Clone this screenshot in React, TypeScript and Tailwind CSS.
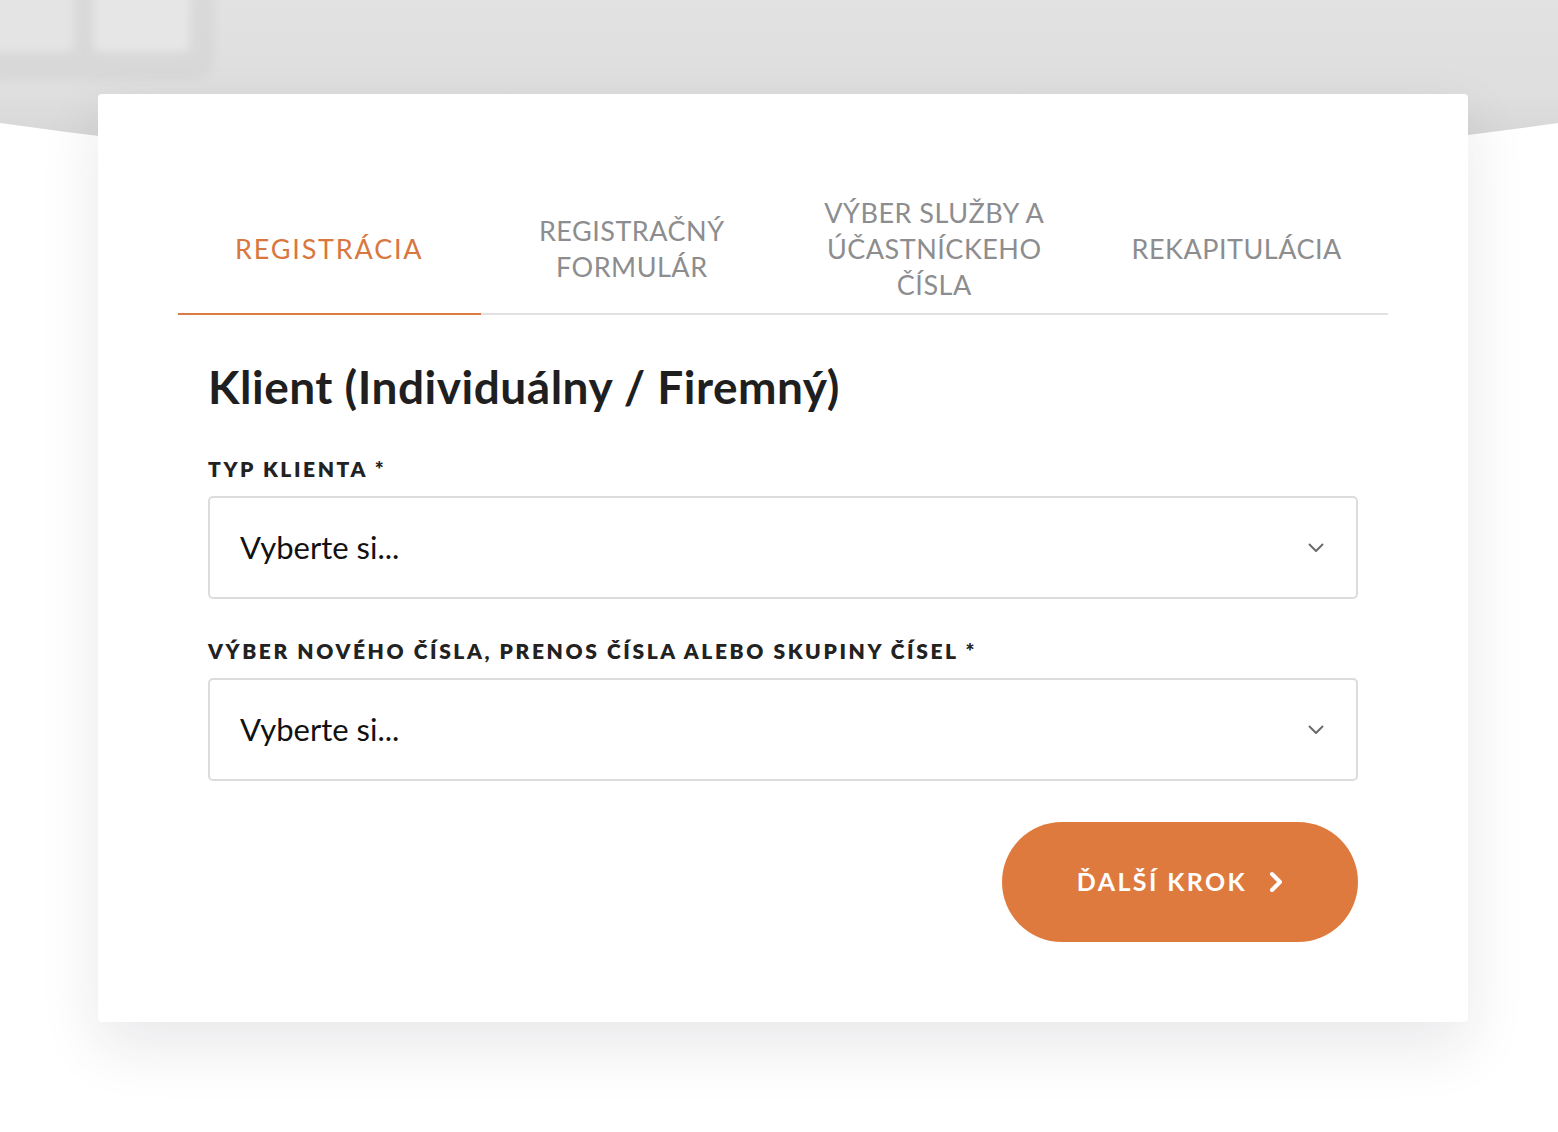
import React from 'react';

const tabs = [
  { label: 'REGISTRÁCIA', active: true },
  { label: 'REGISTRAČNÝ FORMULÁR', active: false },
  { label: 'VÝBER SLUŽBY A ÚČASTNÍCKEHO ČÍSLA', active: false },
  { label: 'REKAPITULÁCIA', active: false },
];

function Backdrop() {
  return (
    <svg
      className="absolute left-0 top-0 h-[240px] w-full"
      viewBox="0 0 1558 240"
      preserveAspectRatio="none"
    >
      <defs>
        <linearGradient id="bg" x1="0" y1="0" x2="0" y2="1">
          <stop offset="0" stopColor="#e2e2e2" />
          <stop offset="0.55" stopColor="#dedede" />
          <stop offset="1" stopColor="#cfcfcf" />
        </linearGradient>
        <filter id="soft">
          <feGaussianBlur stdDeviation="4" />
        </filter>
      </defs>
      <path d="M0 0 H1558 V123 Q779 233 0 123 Z" fill="url(#bg)" />
      {/* blurred keyboard keys */}
      <g filter="url(#soft)">
        <rect x="-20" y="-20" width="235" height="100" rx="22" fill="#d4d4d4" opacity="0.6" />
        <rect x="-10" y="-10" width="84" height="62" rx="8" fill="#e4e4e4" />
        <rect x="94" y="-10" width="96" height="62" rx="8" fill="#e6e6e6" />
      </g>
    </svg>
  );
}

function Chevron() {
  return (
    <svg width="16" height="10" viewBox="0 0 16 10" fill="none">
      <path d="M1.5 1.5 L8 8 L14.5 1.5" stroke="#6b6b6b" strokeWidth="2" strokeLinecap="round" strokeLinejoin="round" />
    </svg>
  );
}

function SelectField({ label }: { label: string }) {
  return (
    <div>
      <label className="block text-[21px] font-extrabold leading-[24px] tracking-[2.6px] text-[#222]">
        {label}
      </label>
      <div className="mt-[15px] flex h-[103px] items-center justify-between rounded-[5px] border-2 border-[#dcdcdc] bg-white pl-[30px] pr-[32px]">
        <span className="text-[31px] leading-none text-[#111]">Vyberte si...</span>
        <Chevron />
      </div>
    </div>
  );
}

export default function App() {
  return (
    <div
      className="relative min-h-[1132px] w-full overflow-hidden bg-white"
      style={{ fontFamily: 'Lato, "Open Sans", "Noto Sans", sans-serif' }}
    >
      <Backdrop />

      <div className="relative ml-[98px] mr-[90px] pt-[94px]">
        <div className="h-[928px] rounded-[4px] bg-white px-[80px] pt-[103px] shadow-[0_24px_60px_rgba(40,30,50,0.10)]">
          {/* Steps */}
          <div className="grid grid-cols-4 border-b-2 border-[#e1e1e1]">
            {tabs.map((t) => (
              <div
                key={t.label}
                className={`-mb-[2px] flex h-[118px] items-center justify-center border-b-2 px-[40px] pb-[12px] text-center text-[27px] leading-[36px] tracking-[0.5px] ${
                  t.active ? 'border-[#dc7a44] text-[#d8773f] tracking-[1.8px]' : 'border-transparent text-[#8d8d8f]'
                }`}
              >
                {t.label}
              </div>
            ))}
          </div>

          {/* Form */}
          <div className="px-[30px] pt-[44px]">
            <h1 className="text-[46px] font-bold leading-[56px] tracking-[0.5px] text-[#1f1f1f]">
              Klient (Individuálny / Firemný)
            </h1>

            <div className="mt-[42px] flex flex-col gap-[40px]">
              <SelectField label="TYP KLIENTA *" />
              <SelectField label="VÝBER NOVÉHO ČÍSLA, PRENOS ČÍSLA ALEBO SKUPINY ČÍSEL *" />
            </div>

            <div className="mt-[41px] flex justify-end">
              <button className="flex h-[120px] w-[356px] items-center justify-center gap-[22px] rounded-full bg-[#df7a3f] text-[25px] font-bold tracking-[2.4px] text-white">
                <span>ĎALŠÍ KROK</span>
                <svg width="14" height="22" viewBox="0 0 14 22" fill="none">
                  <path d="M3 3 L11 11 L3 19" stroke="#fff" strokeWidth="4" strokeLinecap="round" strokeLinejoin="round" />
                </svg>
              </button>
            </div>
          </div>
        </div>
      </div>
    </div>
  );
}
